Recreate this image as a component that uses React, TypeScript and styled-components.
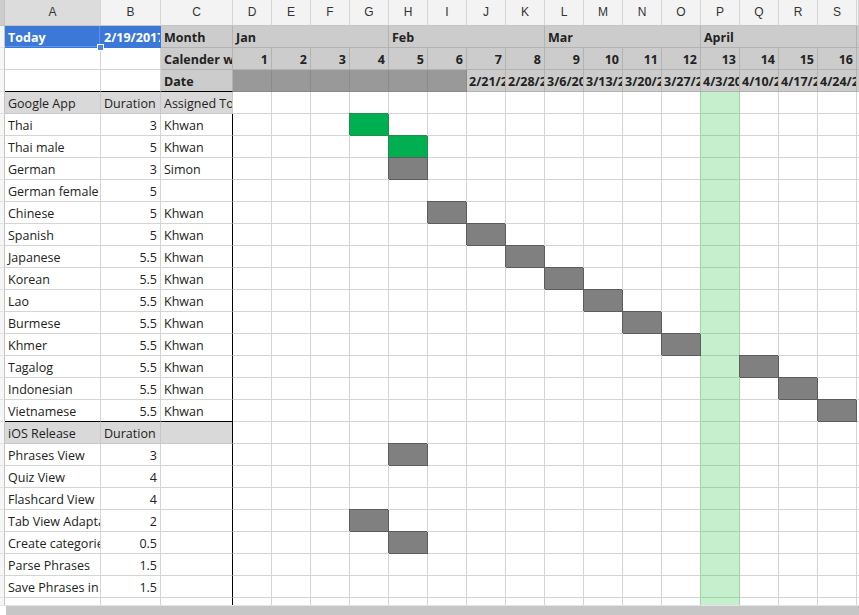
import styled, { createGlobalStyle, css } from "styled-components";

const GlobalStyle = createGlobalStyle`
  html, body {
    margin: 0;
    padding: 0;
    background: #ffffff;
    overflow: hidden;
  }
  body {
    font-family: "Open Sans", "Liberation Sans", sans-serif;
  }
`;

type Tone = "plain" | "band" | "dark" | "label" | "today" | "green";

const toneBg: Record<Tone, string> = {
  plain: "#ffffff",
  band: "#cccccc",
  dark: "#999999",
  label: "#d9d9d9",
  today: "#3c78d8",
  green: "#c6efce",
};

const toneLine: Record<Tone, string> = {
  plain: "#d4d4d4",
  band: "#b3b3b3",
  dark: "#8a8a8a",
  label: "#c8c8c8",
  today: "#3c78d8",
  green: "#a3d3ab",
};

const Frame = styled.div`
  width: 859px;
  height: 615px;
  display: flex;
  flex-direction: column;
  overflow: hidden;
`;

const Sheet = styled.div`
  flex: none;
  height: 605px;
  overflow: hidden;
  display: grid;
  grid-template-columns: 5px 96px 60px 72px repeat(16, 39px) 2px;
  grid-template-rows: 26px;
  grid-auto-rows: 22px;
`;

const ColHead = styled.div<{ $active?: boolean }>`
  box-sizing: border-box;
  background: ${(p) => (p.$active ? "#dcdcdc" : "#f3f3f3")};
  border-right: 1px solid #d6d6d6;
  border-bottom: 1px solid #c4c4c4;
  font-family: "Liberation Sans", Arial, sans-serif;
  font-size: 12px;
  color: #333333;
  text-align: center;
  line-height: 25px;
`;

const Stub = styled.div<{ $corner?: boolean }>`
  box-sizing: border-box;
  background: ${(p) => (p.$corner ? "#cdcdcd" : "#f6f6f6")};
  border-right: 1px solid #c4c4c4;
  border-bottom: 1px solid ${(p) => (p.$corner ? "#c4c4c4" : "#e2e2e2")};
`;

const Cell = styled.div<{
  $tone?: Tone;
  $bold?: boolean;
  $right?: boolean;
  $rb?: string;
  $bb?: string;
  $span?: number;
}>`
  box-sizing: border-box;
  position: relative;
  min-width: 0;
  overflow: hidden;
  white-space: nowrap;
  padding: 1px 3px 0;
  font-size: 12.5px;
  line-height: 21px;
  color: ${(p) => (p.$tone === "today" ? "#ffffff" : "#222222")};
  font-weight: ${(p) => (p.$bold ? 700 : 400)};
  text-align: ${(p) => (p.$right ? "right" : "left")};
  background: ${(p) => toneBg[p.$tone ?? "plain"]};
  border-right: 1px solid ${(p) => p.$rb ?? toneLine[p.$tone ?? "plain"]};
  border-bottom: 1px solid ${(p) => p.$bb ?? toneLine[p.$tone ?? "plain"]};
  ${(p) =>
    p.$span &&
    css`
      grid-column: span ${p.$span};
    `}
`;

const TodayCell = styled(Cell)`
  overflow: visible;
  z-index: 2;
  box-shadow: inset 0 -1px 0 #5b93ee, inset -1px 0 0 #5b93ee;
`;

const DateCell = styled(Cell)`
  padding-left: 2px;
`;

const Handle = styled.span`
  position: absolute;
  right: -4px;
  bottom: -4px;
  width: 5px;
  height: 5px;
  background: #4a86e8;
  border: 1px solid #ffffff;
`;

const Bar = styled.div<{ $kind: "green" | "gray" }>`
  box-sizing: border-box;
  background: ${(p) => (p.$kind === "green" ? "#00b050" : "#808080")};
  border-right: 1px solid ${(p) => (p.$kind === "green" ? "#238d4f" : "#5c5c5c")};
  border-bottom: 1px solid ${(p) => (p.$kind === "green" ? "#238d4f" : "#5c5c5c")};
  box-shadow: -1px -1px 0 0 ${(p) => (p.$kind === "green" ? "#238d4f" : "#5c5c5c")};
  position: relative;
`;

const ScrollTrack = styled.div`
  flex: none;
  height: 10px;
  box-sizing: border-box;
  border-top: 1px solid #e4e4e4;
  background: #ffffff;
  display: flex;
`;

const ScrollThumb = styled.div`
  flex: 1;
  margin-left: 6px;
  background: #c6c6c6;
`;

const letters = "ABCDEFGHIJKLMNOPQRS".split("");
const months = ["Jan", "Feb", "Mar", "April"];
const dates = [
  "2/21/2017",
  "2/28/2017",
  "3/6/2017",
  "3/13/2017",
  "3/20/2017",
  "3/27/2017",
  "4/3/2017",
  "4/10/2017",
  "4/17/2017",
  "4/24/2017",
];

type Task = { name: string; dur?: string; who?: string; bar?: number; kind?: "green" | "gray"; section?: boolean };

// bar = column index among D..S (D = 0)
const tasks: Task[] = [
  { name: "Google App", dur: "Duration", who: "Assigned To", section: true },
  { name: "Thai", dur: "3", who: "Khwan", bar: 3, kind: "green" },
  { name: "Thai male", dur: "5", who: "Khwan", bar: 4, kind: "green" },
  { name: "German", dur: "3", who: "Simon", bar: 4, kind: "gray" },
  { name: "German female", dur: "5", who: "" },
  { name: "Chinese", dur: "5", who: "Khwan", bar: 5, kind: "gray" },
  { name: "Spanish", dur: "5", who: "Khwan", bar: 6, kind: "gray" },
  { name: "Japanese", dur: "5.5", who: "Khwan", bar: 7, kind: "gray" },
  { name: "Korean", dur: "5.5", who: "Khwan", bar: 8, kind: "gray" },
  { name: "Lao", dur: "5.5", who: "Khwan", bar: 9, kind: "gray" },
  { name: "Burmese", dur: "5.5", who: "Khwan", bar: 10, kind: "gray" },
  { name: "Khmer", dur: "5.5", who: "Khwan", bar: 11, kind: "gray" },
  { name: "Tagalog", dur: "5.5", who: "Khwan", bar: 13, kind: "gray" },
  { name: "Indonesian", dur: "5.5", who: "Khwan", bar: 14, kind: "gray" },
  { name: "Vietnamese", dur: "5.5", who: "Khwan", bar: 15, kind: "gray" },
  { name: "iOS Release", dur: "Duration", who: "", section: true },
  { name: "Phrases View", dur: "3", bar: 4, kind: "gray" },
  { name: "Quiz View", dur: "4" },
  { name: "Flashcard View", dur: "4" },
  { name: "Tab View Adaptation", dur: "2", bar: 3, kind: "gray" },
  { name: "Create categories", dur: "0.5", bar: 4, kind: "gray" },
  { name: "Parse Phrases", dur: "1.5" },
  { name: "Save Phrases in database", dur: "1.5" },
  { name: "" },
];

const GREEN_COL = 12; // column P

function TimelineCells({ task, row }: { task: Task; row: number }) {
  return (
    <>
      {Array.from({ length: 16 }, (_, i) => {
        if (task.bar === i && task.kind) {
          return <Bar key={`t${row}-${i}`} $kind={task.kind} />;
        }
        if (i === GREEN_COL) {
          return <Cell key={`t${row}-${i}`} $tone="green" />;
        }
        return (
          <Cell
            key={`t${row}-${i}`}
            $rb={i === GREEN_COL - 1 ? "#a3d3ab" : undefined}
          />
        );
      })}
      <Cell key={`t${row}-end`} />
    </>
  );
}

export default function App() {
  return (
    <>
      <GlobalStyle />
      <Frame>
        <Sheet>
          {/* column letters */}
          <Stub $corner />
          {letters.map((l) => (
            <ColHead key={l} $active={l === "A"}>
              {l}
            </ColHead>
          ))}
          <ColHead />

          {/* row 1: today + months */}
          <Stub />
          <TodayCell $tone="today" $bold>
            Today
            <Handle />
          </TodayCell>
          <Cell $tone="today" $bold>
            2/19/2017
          </Cell>
          <Cell $tone="band" $bold>
            Month
          </Cell>
          {months.map((m) => (
            <Cell key={m} $tone="band" $bold $span={4}>
              {m}
            </Cell>
          ))}
          <Cell $tone="band" />

          {/* row 2: calendar weeks */}
          <Stub />
          <Cell />
          <Cell />
          <Cell $tone="band" $bold>
            Calender week
          </Cell>
          {Array.from({ length: 16 }, (_, i) => (
            <Cell key={`w${i}`} $tone="band" $bold $right>
              {i + 1}
            </Cell>
          ))}
          <Cell $tone="band" />

          {/* row 3: dates */}
          <Stub />
          <Cell $bb="#000000" />
          <Cell $bb="#000000" />
          <Cell $tone="band" $bold $bb="#000000">
            Date
          </Cell>
          {Array.from({ length: 6 }, (_, i) => (
            <Cell key={`d${i}`} $tone="dark" />
          ))}
          {dates.map((d) => (
            <DateCell key={d} $tone="band" $bold>
              {d}
            </DateCell>
          ))}
          <Cell $tone="band" />

          {/* task rows */}
          {tasks.map((t, r) => {
            const lastBeforeSection = tasks[r + 1]?.section;
            const bb = lastBeforeSection ? "#000000" : undefined;
            return [
              <Stub key={`s${r}`} />,
              <Cell key={`a${r}`} $tone={t.section ? "label" : "plain"} $bb={bb}>
                {t.name}
              </Cell>,
              <Cell
                key={`b${r}`}
                $tone={t.section ? "label" : "plain"}
                $right={!t.section}
                $bb={bb}
              >
                {t.dur}
              </Cell>,
              <Cell
                key={`c${r}`}
                $tone={t.section ? "label" : "plain"}
                $bb={bb}
                $rb={r === 0 ? undefined : "#000000"}
              >
                {t.who}
              </Cell>,
              <TimelineCells key={`g${r}`} task={t} row={r} />,
            ];
          })}
        </Sheet>
        <ScrollTrack>
          <ScrollThumb />
        </ScrollTrack>
      </Frame>
    </>
  );
}
